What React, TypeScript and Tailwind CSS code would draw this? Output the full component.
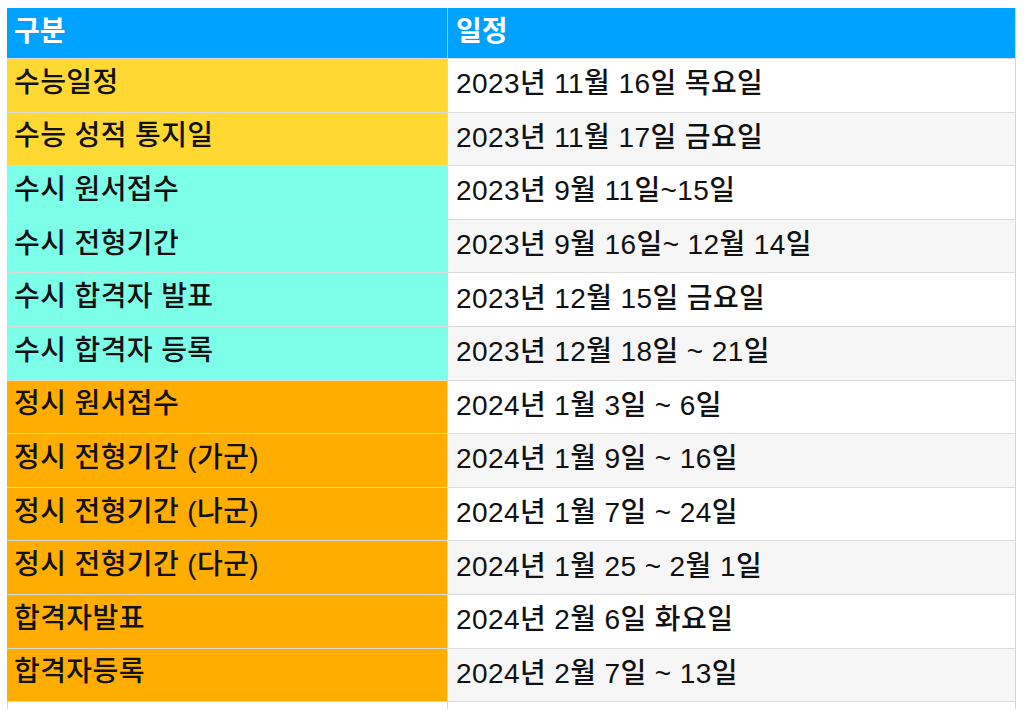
import React from "react";

type Row = { label: string; date: string; tone: "yellow" | "cyan" | "orange" | "blank" };

const rows: Row[] = [
  { label: "수능일정", date: "2023년 11월 16일 목요일", tone: "yellow" },
  { label: "수능 성적 통지일", date: "2023년 11월 17일 금요일", tone: "yellow" },
  { label: "수시 원서접수", date: "2023년 9월 11일~15일", tone: "cyan" },
  { label: "수시 전형기간", date: "2023년 9월 16일~ 12월 14일", tone: "cyan" },
  { label: "수시 합격자 발표", date: "2023년 12월 15일 금요일", tone: "cyan" },
  { label: "수시 합격자 등록", date: "2023년 12월 18일 ~ 21일", tone: "cyan" },
  { label: "정시 원서접수", date: "2024년 1월 3일 ~ 6일", tone: "orange" },
  { label: "정시 전형기간 (가군)", date: "2024년 1월 9일 ~ 16일", tone: "orange" },
  { label: "정시 전형기간 (나군)", date: "2024년 1월 7일 ~ 24일", tone: "orange" },
  { label: "정시 전형기간 (다군)", date: "2024년 1월 25 ~ 2월 1일", tone: "orange" },
  { label: "합격자발표", date: "2024년 2월 6일 화요일", tone: "orange" },
  { label: "합격자등록", date: "2024년 2월 7일 ~ 13일", tone: "orange" },
  { label: "", date: "", tone: "blank" },
];

const toneClass = {
  yellow: "bg-[#ffd932]",
  cyan: "bg-[#7cfee9]",
  orange: "bg-[#ffad00]",
  blank: "bg-white",
};

export default function App() {
  return (
    <div className="h-[709px] overflow-hidden bg-white pt-[8px] pl-[7px] font-['Liberation_Sans','Noto_Sans_CJK_KR',sans-serif] text-[28px] tracking-[0.4px] font-medium text-[#111]">
      <div className="w-[1009px] border-r border-[#d4d4d4]">
        {/* header */}
        <div className="grid grid-cols-[441px_1fr] h-[50px] bg-[#00a2ff] text-white font-bold tracking-normal">
          <div className="flex items-center pl-[7px] pb-[3px] border-r border-[#7fcbf5]">구분</div>
          <div className="flex items-center pl-[8px] pb-[3px]">일정</div>
        </div>

        {rows.map((row, i) => (
          <div
            key={i}
            className="grid grid-cols-[441px_1fr] h-[53.6px] border-t border-[#dadada]"
          >
            <div
              className={`flex items-center pl-[7px] pb-[5px] border-r border-[#d6d6d6] ${toneClass[row.tone]} ${
                row.tone === "blank" ? "border-l" : ""
              }`}
            >
              {row.label}
            </div>
            <div
              className={`flex items-center pl-[8px] pb-[2px] ${
                i % 2 === 0 ? "bg-white" : "bg-[#f6f6f6]"
              }`}
            >
              {row.date}
            </div>
          </div>
        ))}
      </div>
    </div>
  );
}
